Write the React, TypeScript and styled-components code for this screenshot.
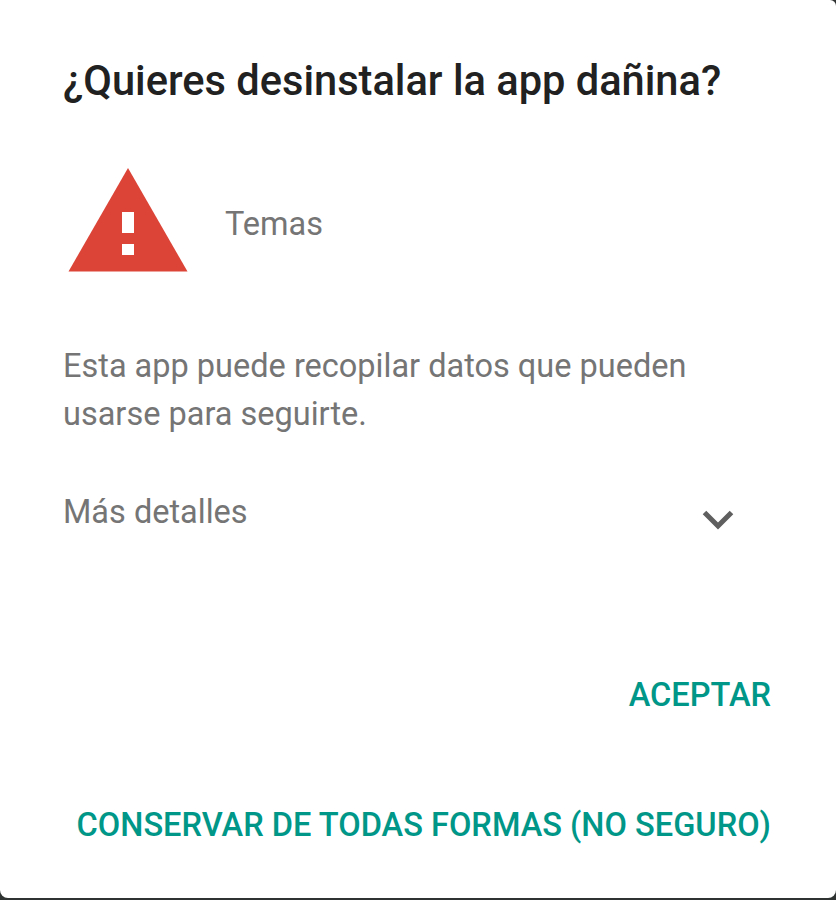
import React from "react";
import styled, { createGlobalStyle } from "styled-components";

const GlobalStyle = createGlobalStyle`
    html, body {
        margin: 0;
        padding: 0;
        background: #2f3432;
    }
    body {
        font-family: Roboto, "Liberation Sans", sans-serif;
    }
`;

function WarningIcon() {
    return (
        <svg width="120" height="104" viewBox="0 0 120 104" aria-hidden="true">
            <path d="M60 0 L119.5 103.5 L0.5 103.5 Z" fill="#dc4437" />
            <rect x="54" y="44" width="12" height="21" fill="#fff" />
            <rect x="54" y="76" width="12" height="11" fill="#fff" />
        </svg>
    );
}

export default function App() {
    return (
        <>
            <GlobalStyle />
            <Dialog>
                <Title>¿Quieres desinstalar la app dañina?</Title>
                <AppRow>
                    <WarningIcon />
                    <AppName>Temas</AppName>
                </AppRow>
                <Message>Esta app puede recopilar datos que pueden usarse para seguirte.</Message>
                <DetailsRow>
                    <DetailsLabel>Más detalles</DetailsLabel>
                    <Chevron width="34" height="22" viewBox="0 0 34 22" aria-hidden="true">
                        <path d="M3.5 3.5 L17 17 L30.5 3.5" fill="none" stroke="#5f5f5f" strokeWidth="5" />
                    </Chevron>
                </DetailsRow>
                <Actions>
                    <ActionButton>ACEPTAR</ActionButton>
                    <ActionButton>CONSERVAR DE TODAS FORMAS (NO SEGURO)</ActionButton>
                </Actions>
            </Dialog>
        </>
    );
}

const Dialog = styled.div`
    box-sizing: border-box;
    width: 836px;
    height: 898px;
    background: #ffffff;
    border-radius: 0 6px 8px 8px;
    padding: 57px 64px 0 63px;
    display: flex;
    flex-direction: column;
`;

const Title = styled.h1`
    margin: 0;
    font-size: 41.6px;
    line-height: 48px;
    font-weight: 500;
    color: #212121;
    white-space: nowrap;
`;

const AppRow = styled.div`
    display: flex;
    align-items: flex-start;
    gap: 37px;
    margin-top: 63px;
    padding-left: 5px;
`;

const AppName = styled.span`
    font-size: 32.5px;
    line-height: 44px;
    color: #757575;
    margin-top: 34px;
`;

const Message = styled.p`
    margin: 70px 0 0 0;
    width: 650px;
    font-size: 32.5px;
    line-height: 48px;
    color: #757575;
`;

const DetailsRow = styled.div`
    display: flex;
    justify-content: space-between;
    align-items: flex-end;
    margin-top: 50px;
    padding-right: 37px;
`;

const DetailsLabel = styled.span`
    font-size: 32.5px;
    line-height: 48px;
    color: #757575;
`;

const Chevron = styled.svg`
    margin-bottom: 5px;
`;

const Actions = styled.div`
    display: flex;
    flex-direction: column;
    align-items: flex-end;
    gap: 86px;
    margin-top: 137px;
    padding-right: 1px;
`;

const ActionButton = styled.button`
    border: 0;
    background: none;
    padding: 0;
    font-family: inherit;
    font-size: 32.6px;
    line-height: 44px;
    font-weight: 500;
    color: #009688;
    white-space: nowrap;
`;
